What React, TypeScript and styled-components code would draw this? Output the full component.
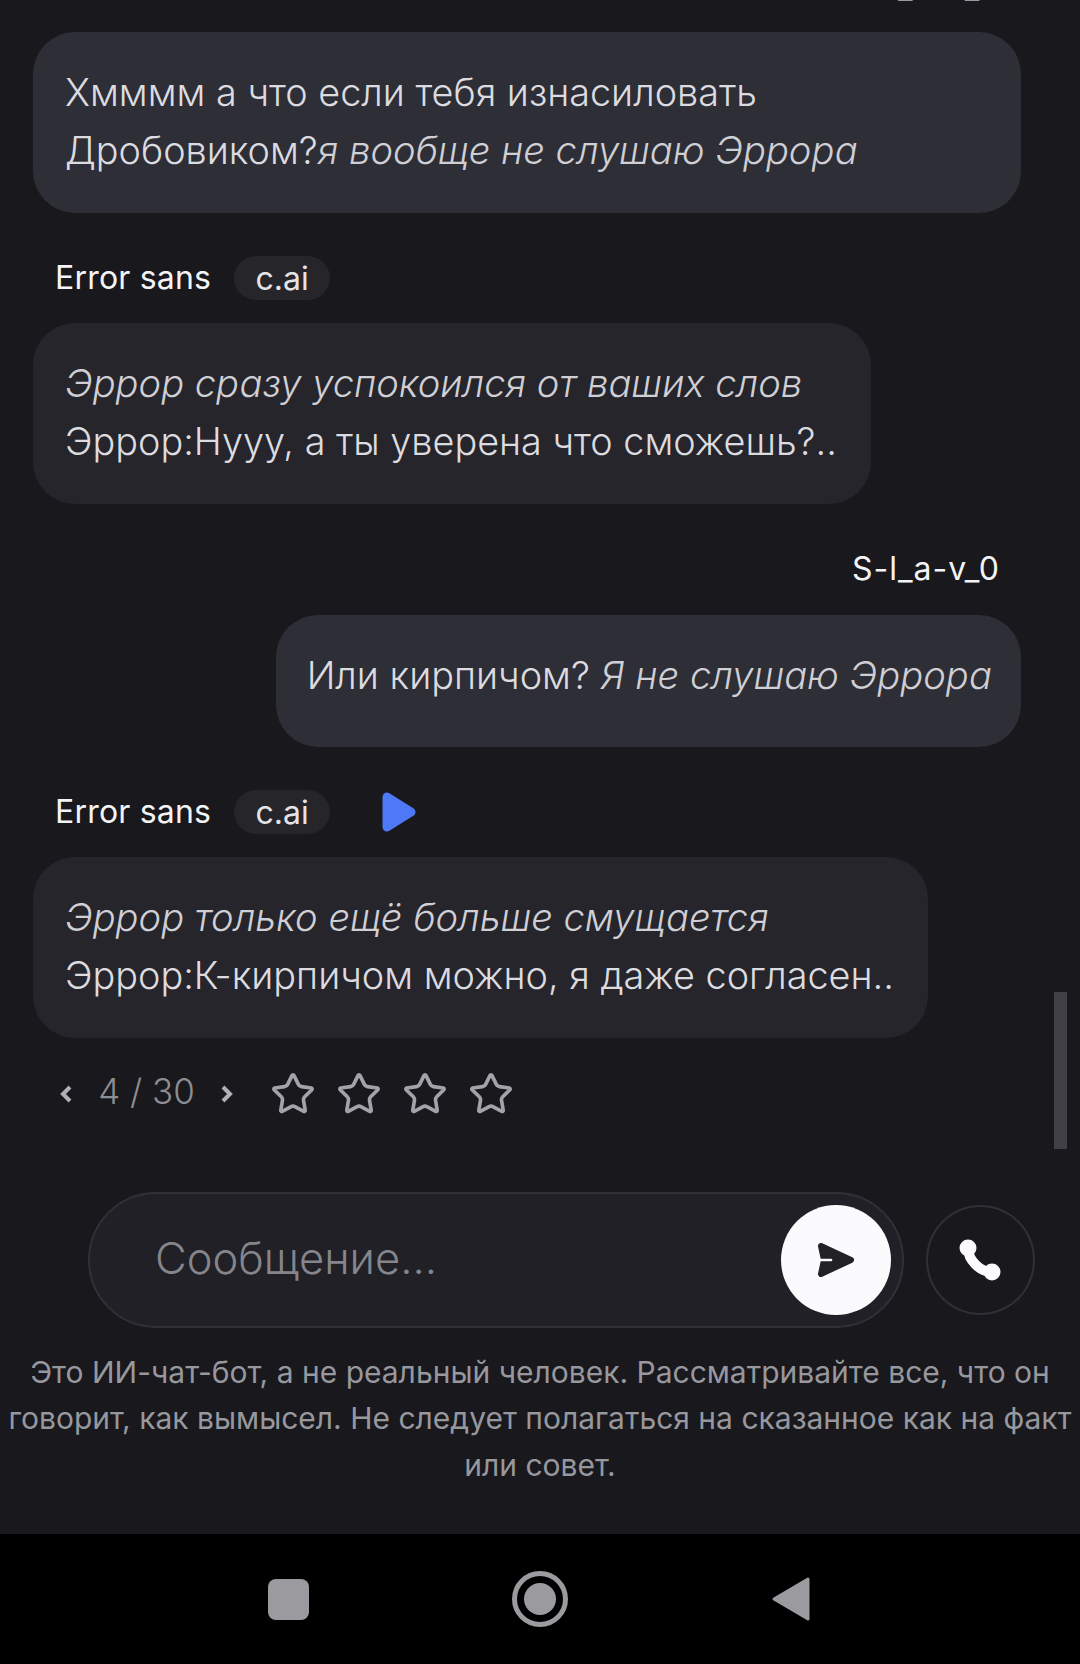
import React from 'react';
import styled, { createGlobalStyle } from 'styled-components';
import { Star } from 'lucide-react';

const GlobalStyle = createGlobalStyle`
  html, body {
    margin: 0;
    padding: 0;
    background: #18181d;
  }
  * {
    box-sizing: border-box;
  }
`;

const Page = styled.div`
  position: relative;
  width: 1080px;
  height: 1664px;
  overflow: hidden;
  display: flex;
  flex-direction: column;
  background: #18181d;
  font-family: Inter, "Noto Sans", sans-serif;
`;

const Messages = styled.div`
  flex: 1;
  min-height: 0;
  overflow: hidden;
  display: flex;
  flex-direction: column;
  padding: 0 59px 0 33px;
`;

const NameRow = styled.div<{ $right?: boolean; $clipped?: boolean }>`
  height: 44px;
  margin-top: ${(p) => (p.$clipped ? '-35px' : '43px')};
  margin-bottom: ${(p) => (p.$clipped ? '23px' : p.$right ? '24px' : '23px')};
  padding: ${(p) => (p.$right ? '0 21px 0 0' : '0 0 0 22px')};
  display: flex;
  align-items: center;
  justify-content: ${(p) => (p.$right ? 'flex-end' : 'flex-start')};
`;

const Name = styled.span`
  font-size: 32px;
  line-height: 44px;
  letter-spacing: 0.2px;
  color: #f4f4f6;
`;

const UserName = styled(Name)`
  letter-spacing: 1px;
`;

const Chip = styled.span`
  height: 44px;
  width: 96px;
  margin-left: 23px;
  display: flex;
  align-items: center;
  justify-content: center;
  border-radius: 22px;
  background: #25252a;
  font-size: 32px;
  color: #e4e4e8;
`;

const PlayButton = styled.svg`
  width: 34px;
  height: 40px;
  margin-left: 52px;
  display: block;
`;

const Bubble = styled.div<{ $user?: boolean; $wide?: boolean; $tone?: string }>`
  align-self: ${(p) => (p.$user ? 'flex-end' : p.$wide ? 'stretch' : 'flex-start')};
  width: ${(p) => (p.$wide ? 'auto' : 'fit-content')};
  min-height: 132px;
  padding: ${(p) => (p.$user ? '31px 29px 34px 31px' : '31px 34px 34px 32px')};
  border-radius: 42px;
  background: ${(p) => p.$tone || '#25252b'};
  font-size: 37.8px;
  font-weight: 300;
  line-height: 58px;
  color: #dcdce0;
`;

const Line = styled.div`
  white-space: nowrap;
`;

const Action = styled.em`
  font-size: 38.1px;
  font-style: italic;
  font-weight: 300;
  color: #cfcfd5;
`;

const RatingRow = styled.div`
  height: 50px;
  margin-top: 31px;
  padding-left: 25px;
  display: flex;
  align-items: center;
  color: #8d8d94;
`;

const Pager = styled.span`
  width: 145px;
  padding-bottom: 6px;
  text-align: center;
  font-size: 35px;
  font-weight: 300;
  color: #8d8d94;
`;

const Stars = styled.div`
  margin-left: 35px;
  display: flex;
  gap: 20px;
`;

const Chevron = styled.svg`
  width: 16px;
  height: 24px;
  display: block;
`;

const ComposerRow = styled.div`
  padding: 0 45px 0 88px;
  display: flex;
  align-items: center;
`;

const Composer = styled.div`
  width: 819px;
  height: 136px;
  padding: 0 11px 0 65px;
  display: flex;
  align-items: center;
  justify-content: space-between;
  border: 2px solid #303036;
  border-radius: 68px;
  background: #202026;
`;

const Placeholder = styled.span`
  padding-bottom: 3px;
  font-size: 43.5px;
  font-weight: 300;
  color: #85858c;
`;

const SendButton = styled.div`
  width: 110px;
  height: 110px;
  display: flex;
  align-items: center;
  justify-content: center;
  border-radius: 50%;
  background: #fbfafd;
`;

const CallButton = styled.div`
  width: 110px;
  height: 110px;
  margin-left: 22px;
  display: flex;
  align-items: center;
  justify-content: center;
  border: 2px solid #303036;
  border-radius: 50%;
`;

const Disclaimer = styled.div`
  margin-top: 21px;
  padding-bottom: 46px;
  text-align: center;
  font-size: 30px;
  line-height: 46.5px;
  color: #97979e;
`;

const NavBar = styled.div`
  height: 130px;
  padding: 0 269px 0 268px;
  display: flex;
  align-items: center;
  justify-content: space-between;
  background: #000000;
`;

const NavSquare = styled.div`
  width: 41px;
  height: 41px;
  border-radius: 8px;
  background: #9b9a9f;
`;

const NavHome = styled.div`
  width: 56px;
  height: 56px;
  display: flex;
  align-items: center;
  justify-content: center;
  border: 5px solid #9b9a9f;
  border-radius: 50%;
`;

const NavHomeDot = styled.div`
  width: 32px;
  height: 32px;
  border-radius: 50%;
  background: #9b9a9f;
`;

const ScrollThumb = styled.div`
  position: absolute;
  top: 992px;
  left: 1054px;
  width: 13px;
  height: 157px;
  background: #404046;
`;

const App = () => {
  return (
    <Page>
      <GlobalStyle />
      <Messages>
        <NameRow $right $clipped>
          <UserName>S-l_a-v_0</UserName>
        </NameRow>
        <Bubble $wide $tone="#2e2e36">
          <Line>Хмммм а что если тебя изнасиловать</Line>
          <Line>
            Дробовиком?<Action>я вообще не слушаю Эррора</Action>
          </Line>
        </Bubble>

        <NameRow>
          <Name>Error sans</Name>
          <Chip>c.ai</Chip>
        </NameRow>
        <Bubble>
          <Line>
            <Action>Эррор сразу успокоился от ваших слов</Action>
          </Line>
          <Line>Эррор:Нууу, а ты уверена что сможешь?..</Line>
        </Bubble>

        <NameRow $right>
          <UserName>S-l_a-v_0</UserName>
        </NameRow>
        <Bubble $user $tone="#2e2e36">
          <Line>
            Или кирпичом? <Action>Я не слушаю Эррора</Action>
          </Line>
        </Bubble>

        <NameRow>
          <Name>Error sans</Name>
          <Chip>c.ai</Chip>
          <PlayButton viewBox="0 0 34 40">
            <path d="M5 5 L29 20 L5 35 Z" fill="#4e78f5" stroke="#4e78f5" strokeWidth="9" strokeLinejoin="round" />
          </PlayButton>
        </NameRow>
        <Bubble>
          <Line>
            <Action>Эррор только ещё больше смущается</Action>
          </Line>
          <Line>Эррор:К-кирпичом можно, я даже согласен..</Line>
        </Bubble>

        <RatingRow>
          <Chevron viewBox="0 0 16 24">
            <path d="M12 5 L5 12 L12 19" fill="none" stroke="#b0b0b6" strokeWidth="4" />
          </Chevron>
          <Pager>4 / 30</Pager>
          <Chevron viewBox="0 0 16 24">
            <path d="M4 5 L11 12 L4 19" fill="none" stroke="#b0b0b6" strokeWidth="4" />
          </Chevron>
          <Stars>
            {[0, 1, 2, 3].map((i) => (
              <Star key={i} size={46} strokeWidth={1.9} color="#a3a3a9" />
            ))}
          </Stars>
        </RatingRow>
      </Messages>

      <ComposerRow>
        <Composer>
          <Placeholder>Сообщение...</Placeholder>
          <SendButton>
            <svg width="38" height="36" viewBox="0 0 38 36">
              <path d="M4 4 L34 18 L4 32 L7 18 Z" fill="#222226" stroke="#222226" strokeWidth="6" strokeLinejoin="round" />
              <path d="M3 18 L14 18" stroke="#fbfafd" strokeWidth="2.6" strokeLinecap="round" />
            </svg>
          </SendButton>
        </Composer>
        <CallButton>
          <svg width="42" height="42" viewBox="0 0 42 42">
            <path d="M9 9 C9 21 21 33 33 33" fill="none" stroke="#fbfafd" strokeWidth="10" strokeLinecap="round" />
            <circle cx="9" cy="9" r="8.5" fill="#fbfafd" />
            <circle cx="33" cy="33" r="8.5" fill="#fbfafd" />
          </svg>
        </CallButton>
      </ComposerRow>

      <Disclaimer>
        <Line>Это ИИ-чат-бот, а не реальный человек. Рассматривайте все, что он</Line>
        <Line>говорит, как вымысел. Не следует полагаться на сказанное как на факт</Line>
        <Line>или совет.</Line>
      </Disclaimer>

      <NavBar>
        <NavSquare />
        <NavHome>
          <NavHomeDot />
        </NavHome>
        <svg width="40" height="46" viewBox="0 0 40 46">
          <path d="M37 3 L3 23 L37 43 Z" fill="#9b9a9f" stroke="#9b9a9f" strokeWidth="3" strokeLinejoin="round" />
        </svg>
      </NavBar>

      <ScrollThumb />
    </Page>
  );
};

export default App;
